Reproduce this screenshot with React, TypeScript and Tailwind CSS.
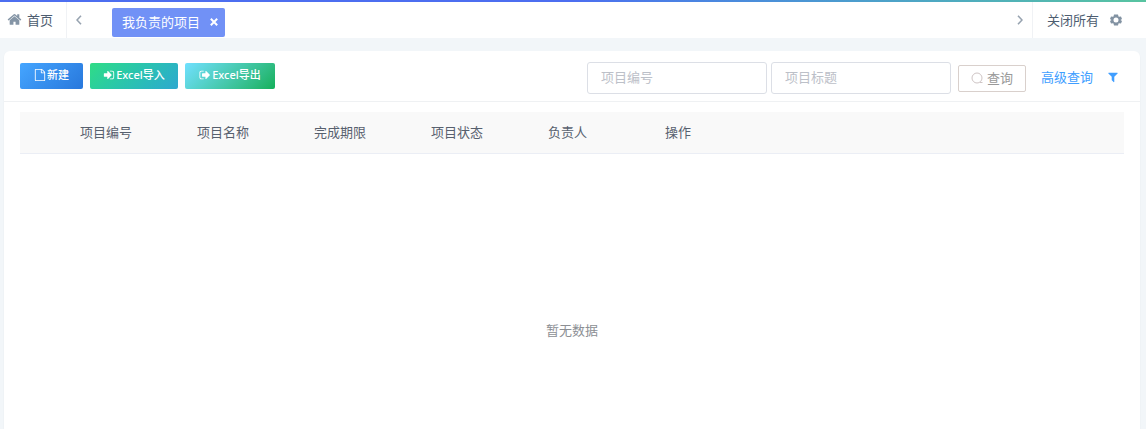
import type { ReactNode } from "react"

const columns = ["项目编号", "项目名称", "完成期限", "项目状态", "负责人", "操作"]

const paths = {
  home: "M1472 992v480q0 26-19 45t-45 19h-384v-384h-256v384h-384q-26 0-45-19t-19-45v-480q0-1 .5-3t.5-3l575-474 575 474q1 2 1 6zm223-69l-62 74q-8 9-21 11h-3q-13 0-21-7l-692-577-692 577q-12 8-24 7-13-2-21-11l-62-74q-8-10-7-23.5t11-21.5l719-599q32-26 76-26t76 26l244 204v-195q0-14 9-23t23-9h192q14 0 23 9t9 23v408l219 182q10 8 11 21.5t-7 23.5z",
  file: "M1596 380q28 28 48 76t20 88v1152q0 40-28 68t-68 28h-1344q-40 0-68-28t-28-68v-1600q0-40 28-68t68-28h896q40 0 88 20t76 48zm-444-244v376h376q-10-29-22-41l-313-313q-12-12-41-22zm384 1528v-1024h-416q-40 0-68-28t-28-68v-416h-768v1536h1280z",
  signIn:
    "M1312 896q0 26-19 45l-544 544q-19 19-45 19t-45-19-19-45v-288h-448q-26 0-45-19t-19-45v-384q0-26 19-45t45-19h448v-288q0-26 19-45t45-19 45 19l544 544q19 19 19 45zm352-352v704q0 119-84.5 203.5t-203.5 84.5h-320q-13 0-22.5-9.5t-9.5-22.5q0-4-1-20t-.5-26.5 3-23.5 10-19.5 20.5-6.5h320q66 0 113-47t47-113v-704q0-66-47-113t-113-47h-312l-11.5-1-11.5-3-8-5.5-7-9-2-13.5q0-4-1-20t-.5-26.5 3-23.5 10-19.5 20.5-6.5h320q119 0 203.5 84.5t84.5 203.5z",
  signOut:
    "M704 1440q0 4 1 20t.5 26.5-3 23.5-10 19.5-20.5 6.5h-320q-119 0-203.5-84.5t-84.5-203.5v-704q0-119 84.5-203.5t203.5-84.5h320q13 0 22.5 9.5t9.5 22.5q0 4 1 20t.5 26.5-3 23.5-10 19.5-20.5 6.5h-320q-66 0-113 47t-47 113v704q0 66 47 113t113 47h312l11.5 1 11.5 3 8 5.5 7 9 2 13.5zm928-544q0 26-19 45l-544 544q-19 19-45 19t-45-19-19-45v-288h-448q-26 0-45-19t-19-45v-384q0-26 19-45t45-19h448v-288q0-26 19-45t45-19 45 19l544 544q19 19 19 45z",
  filter:
    "M1595 295q17 41-14 70l-493 493v742q0 42-39 59-13 5-25 5-27 0-45-19l-256-256q-19-19-19-45v-486l-493-493q-31-29-14-70 17-39 59-39h1280q42 0 59 39z",
}

type GlyphProps = {
  name: keyof typeof paths
  className: string
}

const Glyph = ({ name, className }: GlyphProps) => (
  <svg viewBox="0 0 1792 1792" fill="currentColor" aria-hidden="true" className={`shrink-0 ${className}`}>
    <path d={paths[name]} />
  </svg>
)

const GearIcon = () => (
  <svg viewBox="0 0 24 24" fill="currentColor" aria-hidden="true" className="size-3 shrink-0 text-[#8292a2]">
    <path
      fillRule="evenodd"
      d="M8 1h8l1 4 1 .6L22 5l2 5-3 2 3 2-2 5-4-.6-1 .6-1 4H8l-1-4-1-.6L2 19l-2-5 3-2-3-2 2-5 4 .6L7 5zM12 7a5 5 0 1 0 0 10a5 5 0 0 0 0-10z"
    />
  </svg>
)

const SearchIcon = () => (
  <svg viewBox="0 0 12 12" fill="none" stroke="currentColor" aria-hidden="true" className="size-3 shrink-0 text-[#cfc5c5]">
    <circle cx="6" cy="6" r="5" />
    <path d="M9 10.500h2.500" />
  </svg>
)

const TabBar = () => (
  <header className="bg-white">
    <div className="h-[2px] bg-linear-to-r from-[#4c6ef0] from-50% to-[#58c4a0]" />
    <nav className="flex h-9 items-stretch text-[#4d5d70]">
      <a href="#home" className="flex w-[67px] shrink-0 items-center gap-[5px] border-r border-[#f0f2f5] pb-px pl-[7px]">
        <Glyph name="home" className="size-[15px] text-[#8595a6]" />
        首页
      </a>
      <button aria-label="向左" className="flex w-6 shrink-0 items-center justify-center pb-px text-[#97a3b0]">
        <svg viewBox="0 0 6 10" fill="none" stroke="currentColor" strokeWidth="1.6" className="h-[10px] w-[6px]">
          <path d="M5 .8L1 5l4 4.200" />
        </svg>
      </button>
      <div className="flex flex-1 items-end pb-px pl-[21px]">
        <div className="flex h-[29px] items-center gap-[10px] rounded-xs bg-[#7191f6] pr-[7px] pb-[2px] pl-[10px] text-white">
          <a href="#projects">我负责的项目</a>
          <button aria-label="关闭">
            <svg viewBox="0 0 8 8" stroke="currentColor" strokeWidth="2" className="size-2">
              <path d="M.8.8l6.400 6.400M7.200.8L.8 7.200" />
            </svg>
          </button>
        </div>
      </div>
      <button aria-label="向右" className="flex w-6 shrink-0 items-center justify-center pb-px text-[#97a3b0]">
        <svg viewBox="0 0 6 10" fill="none" stroke="currentColor" strokeWidth="1.6" className="h-[10px] w-[6px]">
          <path d="M1 .8L5 5 1 9.200" />
        </svg>
      </button>
      <button className="flex shrink-0 items-center gap-[11px] border-l border-[#f0f2f5] pr-6 pb-px pl-[14px]">
        关闭所有
        <GearIcon />
      </button>
    </nav>
  </header>
)

type ActionButtonProps = {
  className: string
  children: ReactNode
}

const ActionButton = ({ className, children }: ActionButtonProps) => (
  <button
    className={`flex h-[26px] items-center justify-center gap-px rounded-xs bg-linear-135 pb-[2px] text-[11px] font-medium text-white ${className}`}
  >
    {children}
  </button>
)

const SearchInput = ({ label }: { label: string }) => (
  <input
    type="text"
    aria-label={label}
    placeholder={label}
    className="h-8 w-[180px] rounded-[3px] border border-[#dcdfe6] bg-white px-[13px] pb-[2px] outline-none placeholder:text-[#bcc0c8]"
  />
)

const Toolbar = () => (
  <div className="flex items-start justify-between border-b border-[#eff1f3] pt-[11px] pr-[21px] pb-[7px] pl-4">
    <div className="flex gap-[7px] pt-px">
      <ActionButton className="w-[63px] from-[#45a5ff] to-[#2878dc]">
        <Glyph name="file" className="size-3" />
        新建
      </ActionButton>
      <ActionButton className="w-[88px] from-[#30dc85] to-[#2ea8cf]">
        <Glyph name="signIn" className="size-3" />
        Excel导入
      </ActionButton>
      <ActionButton className="w-[90px] from-[#70e0ff] to-[#12b05a]">
        <Glyph name="signOut" className="size-3" />
        Excel导出
      </ActionButton>
    </div>
    <form className="flex items-center" onSubmit={(e) => e.preventDefault()}>
      <div className="flex gap-1">
        <SearchInput label="项目编号" />
        <SearchInput label="项目标题" />
      </div>
      <button
        type="submit"
        className="ml-[7px] flex h-[27px] w-[68px] items-center justify-center gap-1 rounded-xs border border-[#d9d0cc] text-[#999]"
      >
        <SearchIcon />
        查询
      </button>
      <a href="#advanced" className="ml-[15px] flex items-center gap-[14px] pb-[2px] text-[#409eff]">
        高级查询
        <Glyph name="filter" className="size-3" />
      </a>
    </form>
  </div>
)

const ProjectTable = () => (
  <table className="w-full table-fixed">
    <thead>
      <tr className="h-[41px] border-b border-[#ebeef5] bg-[#f9f9f9] text-left text-[#57606e]">
        <th className="w-[50px]" aria-label="选择" />
        {columns.map((column) => (
          <th key={column} className="w-[117px] px-[10px] font-normal">
            {column}
          </th>
        ))}
        <th aria-hidden="true" />
      </tr>
    </thead>
    <tbody>
      <tr>
        <td colSpan={columns.length + 2} className="h-[354px] text-center text-[#8c8f94]">
          暂无数据
        </td>
      </tr>
    </tbody>
  </table>
)

export default function App() {
  return (
    <div className="h-screen overflow-hidden bg-[#f2f6f9] font-['Noto_Sans','Noto_Sans_CJK_SC',sans-serif] text-[13px] leading-5">
      <TabBar />
      <main className="mt-[13px] mr-[6px] ml-1 rounded-md bg-white shadow-xs">
        <Toolbar />
        <section className="px-4 pt-[10px]">
          <ProjectTable />
        </section>
      </main>
    </div>
  )
}
